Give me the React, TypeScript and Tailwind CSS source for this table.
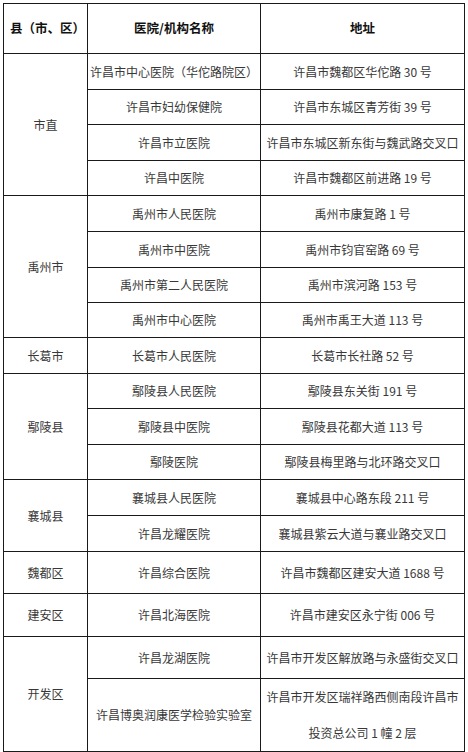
import React from 'react';

interface Site {
  name: string;
  address: string[];
  h: string;
}

interface Group {
  area: string;
  sites: Site[];
}

const GROUPS: Group[] = [
  {
    area: '市直',
    sites: [
      { name: '许昌市中心医院（华佗路院区）', address: ['许昌市魏都区华佗路 30 号'], h: 'h-[36px]' },
      { name: '许昌市妇幼保健院', address: ['许昌市东城区青芳街 39 号'], h: 'h-[35px]' },
      { name: '许昌市立医院', address: ['许昌市东城区新东街与魏武路交叉口'], h: 'h-[36px]' },
      { name: '许昌中医院', address: ['许昌市魏都区前进路 19 号'], h: 'h-[35px]' },
    ],
  },
  {
    area: '禹州市',
    sites: [
      { name: '禹州市人民医院', address: ['禹州市康复路 1 号'], h: 'h-[36px]' },
      { name: '禹州市中医院', address: ['禹州市钧官窑路 69 号'], h: 'h-[36px]' },
      { name: '禹州市第二人民医院', address: ['禹州市滨河路 153 号'], h: 'h-[35px]' },
      { name: '禹州市中心医院', address: ['禹州市禹王大道 113 号'], h: 'h-[35px]' },
    ],
  },
  {
    area: '长葛市',
    sites: [{ name: '长葛市人民医院', address: ['长葛市长社路 52 号'], h: 'h-[36px]' }],
  },
  {
    area: '鄢陵县',
    sites: [
      { name: '鄢陵县人民医院', address: ['鄢陵县东关街 191 号'], h: 'h-[35px]' },
      { name: '鄢陵县中医院', address: ['鄢陵县花都大道 113 号'], h: 'h-[36px]' },
      { name: '鄢陵医院', address: ['鄢陵县梅里路与北环路交叉口'], h: 'h-[35px]' },
    ],
  },
  {
    area: '襄城县',
    sites: [
      { name: '襄城县人民医院', address: ['襄城县中心路东段 211 号'], h: 'h-[36px]' },
      { name: '许昌龙耀医院', address: ['襄城县紫云大道与襄业路交叉口'], h: 'h-[36px]' },
    ],
  },
  {
    area: '魏都区',
    sites: [{ name: '许昌综合医院', address: ['许昌市魏都区建安大道 1688 号'], h: 'h-[42px]' }],
  },
  {
    area: '建安区',
    sites: [{ name: '许昌北海医院', address: ['许昌市建安区永宁街 006 号'], h: 'h-[43px]' }],
  },
  {
    area: '开发区',
    sites: [
      { name: '许昌龙湖医院', address: ['许昌市开发区解放路与永盛街交叉口'], h: 'h-[42px]' },
      {
        name: '许昌博奥润康医学检验实验室',
        address: ['许昌市开发区瑞祥路西侧南段许昌市', '投资总公司 1 幢 2 层'],
        h: 'h-[71px]',
      },
    ],
  },
];

const cell = 'border border-[#1a1a1a] text-center align-middle p-0 whitespace-nowrap';

const App: React.FC = () => {
  return (
    <div
      className="w-[468px] h-[752px] bg-white pt-[3px] pl-[3px] text-[12px] text-[#383838]"
      style={{ fontFamily: '"Noto Sans CJK SC", "Noto Sans", sans-serif' }}
    >
      <table className="border-collapse table-fixed w-[461px]">
        <colgroup>
          <col className="w-[84px]" />
          <col className="w-[173px]" />
          <col className="w-[204px]" />
        </colgroup>
        <thead>
          <tr className="h-[50px]">
            <th className={`${cell} font-bold text-[#111] text-[12.5px] text-left pl-[6px]`}>县（市、区）</th>
            <th className={`${cell} font-bold text-[#111] text-[12.5px]`}>医院/机构名称</th>
            <th className={`${cell} font-bold text-[#111] text-[12.5px]`}>地址</th>
          </tr>
        </thead>
        <tbody>
          {GROUPS.map((group) =>
            group.sites.map((site, i) => (
              <tr key={site.name} className={site.h}>
                {i === 0 && (
                  <td rowSpan={group.sites.length} className={cell}>
                    {group.area}
                  </td>
                )}
                <td className={cell}>{site.name}</td>
                <td className={`${cell} ${site.address.length > 1 ? 'leading-[36px]' : ''}`}>
                  {site.address.map((line) => (
                    <div key={line}>{line}</div>
                  ))}
                </td>
              </tr>
            ))
          )}
        </tbody>
      </table>
    </div>
  );
};

export default App;
